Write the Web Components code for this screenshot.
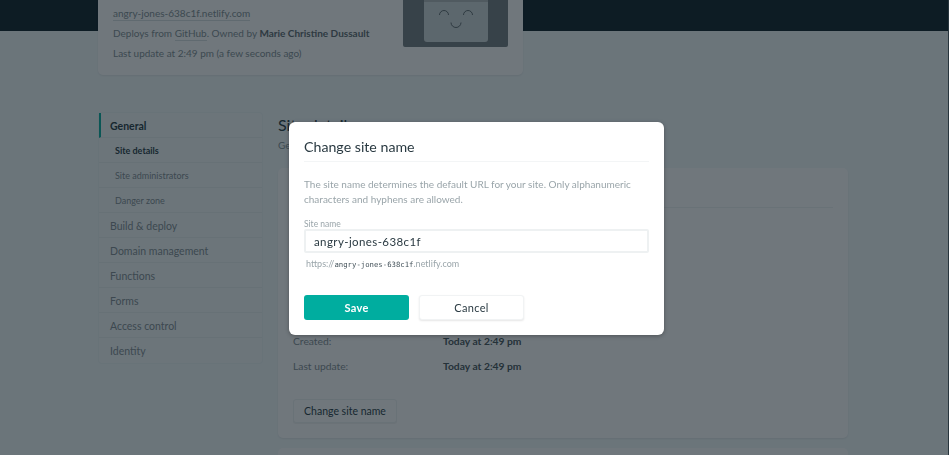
<!DOCTYPE html>
<html lang="en"><head><meta charset="utf-8"><title>Site settings</title>
<style>
html,body{margin:0;padding:0;height:100%;overflow:hidden}
body{font-family:Lato,"Noto Sans",sans-serif}
</style></head><body>
<app-page>
  <site-overview slot="top"></site-overview>
  <side-nav slot="side">
    <nav-item active>General</nav-item>
    <nav-item sub current>Site details</nav-item>
    <nav-item sub>Site administrators</nav-item>
    <nav-item sub>Danger zone</nav-item>
    <nav-item>Build &amp; deploy</nav-item>
    <nav-item>Domain management</nav-item>
    <nav-item>Functions</nav-item>
    <nav-item>Forms</nav-item>
    <nav-item>Access control</nav-item>
    <nav-item last>Identity</nav-item>
  </side-nav>
  <site-details slot="main"></site-details>
</app-page>
<name-dialog></name-dialog>
<script>
function def(name, html){
  customElements.define(name, class extends HTMLElement{
    constructor(){super();this.attachShadow({mode:'open'}).innerHTML=html;}
  });
}
def('app-page',`<style>
:host{display:block;width:949px;height:455px;box-sizing:border-box;overflow:hidden;border-right:1px solid #4a5a62;
background:linear-gradient(#081c24 0 31px,#f3fafb 31px);color:#85949a}
.top{padding-left:98px;width:425px}
.cols{display:flex;gap:16px;padding:38px 0 0 99px}
</style><div class="top"><slot name="top"></slot></div>
<div class="cols"><slot name="side"></slot><slot name="main"></slot></div>`);

def('site-overview',`<style>
:host{display:flex;justify-content:space-between;width:425px;height:75px;box-sizing:border-box;background:#fff;border-radius:0 0 5px 5px;
box-shadow:0 1px 2px rgba(0,0,0,.08);padding:0 15px;font-size:10px;color:#7e8c92}
.t{display:flex;flex-direction:column;padding-top:3px;white-space:nowrap}
.t div{height:20px;line-height:20px}
u{text-decoration:none;border-bottom:1px solid #d8dfe2;padding-bottom:1px}
b{color:#5a676d;font-weight:700}
svg{display:block;flex:none}
</style><div class="t">
<div><u>angry-jones-638c1f.netlify.com</u></div>
<div>Deploys from <u>GitHub</u>. Owned by <b>Marie Christine Dussault</b></div>
<div>Last update at 2:49 pm (a few seconds ago)</div></div>
<svg width="105" height="47" viewBox="0 0 105 47" aria-hidden="true">
<path d="M0 0H105V45a2 2 0 0 1-2 2H2a2 2 0 0 1-2-2Z" fill="#717b7f"/>
<path d="M21 0H85V39a3 3 0 0 1-3 3H24a3 3 0 0 1-3-3Z" fill="#ced7d9"/>
<rect x="21" y="0" width="64" height="2" fill="#aeb7b9"/>
<g fill="none" stroke="#5a666c" stroke-width="1"><path d="M36.5 15a4.5 4.5 0 0 1 9 0"/><path d="M60.5 15a4.5 4.5 0 0 1 9 0"/><path d="M48 22.5a5 5 0 0 0 10 0"/></g>
</svg>`);

def('side-nav',`<style>
:host{display:block;width:163px;height:250px;flex:none;background:#f5fafb;border-radius:3px;box-shadow:0 0 0 1px rgba(0,60,70,.03)}
</style><slot></slot>`);

def('nav-item',`<style>
:host{display:flex;align-items:center;box-sizing:border-box;height:25px;padding:1px 0 0 11px;font-size:10.5px;color:#7f8b91;border-bottom:1px solid #e9eff0}
:host([last]){border-bottom:0}
:host([active]){font-weight:700;color:#24383f;border-left:2px solid #00ac9e;padding-left:9px}
:host([sub]){padding:1px 0 0 16px;font-size:9px}
:host([current]){font-weight:700;color:#24383f}
</style><slot></slot>`);

def('info-row',`<style>
:host{display:grid;grid-template-columns:150px 1fr;height:25px;align-items:center;font-size:10.3px;color:#7f8b91}
b{color:#455359;font-weight:700}
</style><span><slot name="k"></slot></span><b><slot name="v"></slot></b>`);

def('site-details',`<style>
:host{display:block;width:570px;flex:none}
h2{margin:0;font-size:16px;line-height:24px;font-weight:400;color:#24383f;height:24px}
p{margin:1px 0 0;font-size:10px;line-height:14px;height:14px;color:#7d8d93}
.card{margin-top:16px;background:#fff;border-radius:5px;height:270px;box-sizing:border-box;padding:0 15px;box-shadow:0 1px 2px rgba(0,0,0,.08)}
.line{height:39px;border-bottom:1px solid #eef2f3}
.rows{padding-top:120px}
.btn{display:inline-flex;align-items:center;justify-content:center;width:104px;height:24px;margin-top:21px;border:1px solid #eef2f3;border-radius:3px;background:#fff;font-size:10.5px;color:#24383f;box-sizing:border-box;box-shadow:0 1px 1px rgba(0,0,0,.06)}
.next{margin-top:10px;height:30px;background:#fff;border-radius:5px}
</style><h2>Site details</h2><p>General information about your site</p>
<div class="card"><div class="line"></div><div class="rows">
<info-row><span slot="k">Created:</span><span slot="v">Today at 2:49 pm</span></info-row>
<info-row><span slot="k">Last update:</span><span slot="v">Today at 2:49 pm</span></info-row></div>
<div class="btn">Change site name</div></div><div class="next"></div>`);

def('name-dialog',`<style>
:host{position:fixed;inset:0;display:block;background:rgba(16,28,37,.6);padding:122px 0 0 289px;box-sizing:border-box}
.m{width:375px;height:213px;box-sizing:border-box;background:#fff;border-radius:6px;box-shadow:0 1px 4px rgba(0,0,0,.3);padding:0 15px;color:#9aa5aa;font-size:10px}
h3{margin:0;height:40px;line-height:49px;box-sizing:border-box;font-size:14.2px;font-weight:400;color:#2a3a42;border-bottom:1px solid #f3f5f6}
p{margin:15px 0 0;font-size:10px;line-height:15px;height:30px;white-space:nowrap}
label{display:block;margin-top:13px;font-size:8.5px;line-height:9px}
.in{height:24px;box-sizing:border-box;border:2px solid #eef1f2;border-radius:2px;padding-left:8px;display:flex;align-items:center;font-size:11.5px;letter-spacing:.4px;color:#2a3a42}
.h{margin:4px 0 0 2px;font-size:9px;line-height:13px}
code{font-family:"DejaVu Sans Mono",monospace;font-size:7.3px;color:#44525a}
.b{display:flex;gap:10px;margin-top:24px}
.b span{width:105px;height:25px;border-radius:3px;display:flex;align-items:center;justify-content:center;font-size:11px;letter-spacing:.3px;box-sizing:border-box}
.s{background:#00ad9f;color:#fff;font-weight:700}
.c{background:#fff;color:#2a3a42;border:1px solid #f1f3f4;box-shadow:0 1px 2px rgba(0,0,0,.1)}
</style><div class="m" role="dialog"><h3>Change site name</h3>
<p>The site name determines the default URL for your site. Only alphanumeric<br>characters and hyphens are allowed.</p>
<label>Site name</label><div class="in">angry-jones-638c1f</div>
<div class="h">https://<code>angry-jones-638c1f</code>.netlify.com</div>
<div class="b"><span class="s">Save</span><span class="c">Cancel</span></div></div>`);
</script>
</body></html>
